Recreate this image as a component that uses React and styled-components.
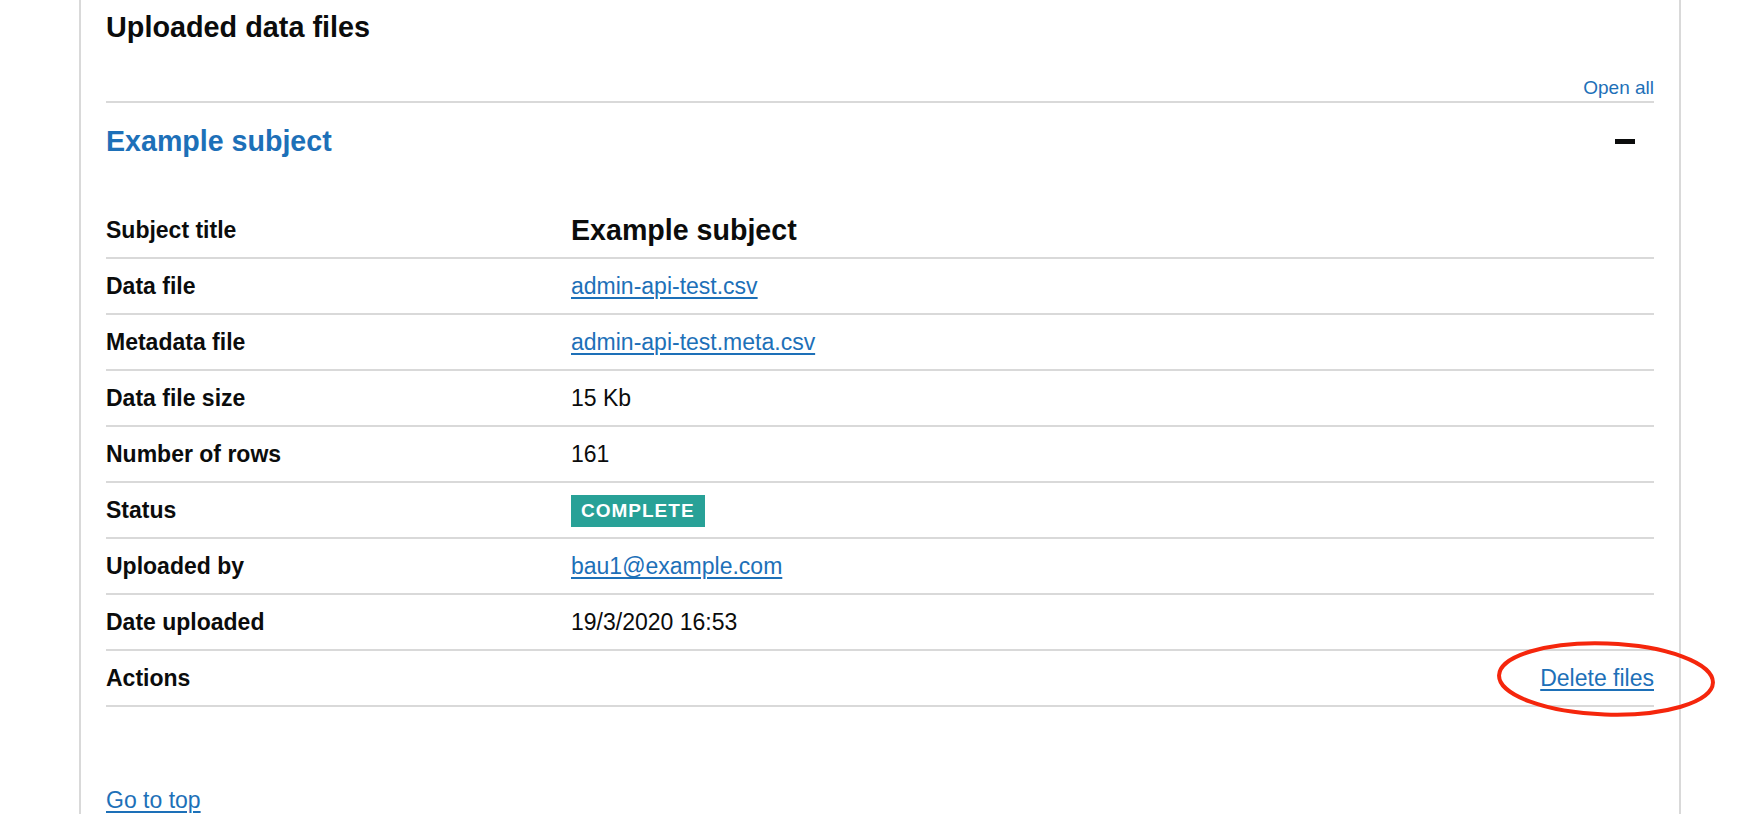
import React from "react";
import styled, { createGlobalStyle } from "styled-components";

const GlobalStyle = createGlobalStyle`
  html, body {
    margin: 0;
    padding: 0;
    background: #ffffff;
  }
  body {
    font-family: "Liberation Sans", Arial, sans-serif;
    color: #0b0c0c;
  }
`;

const Page = styled.div`
  width: 1762px;
  min-height: 814px;
  overflow: hidden;
`;

const Container = styled.main`
  box-sizing: border-box;
  margin-left: 79px;
  width: 1602px;
  min-height: 814px;
  border-left: 2px solid #d9d9d9;
  border-right: 2px solid #d9d9d9;
  padding: 9px 25px 0 25px;
`;

const Heading = styled.h2`
  margin: 0;
  font-size: 28.8px;
  line-height: 36px;
  font-weight: 700;
  color: #0b0c0c;
`;

const Controls = styled.div`
  margin-top: 31px;
  display: flex;
  justify-content: flex-end;
`;

const OpenAll = styled.button`
  border: 0;
  background: none;
  padding: 0;
  font-family: inherit;
  font-size: 19px;
  line-height: 24px;
  color: #1d70b8;
  cursor: pointer;
`;

const Section = styled.section`
  border-top: 2px solid #d9d9d9;
  margin-top: 1px;
`;

const SectionHeader = styled.div`
  display: flex;
  align-items: center;
  justify-content: space-between;
  padding: 20px 0 44px 0;
`;

const SectionTitle = styled.h3`
  margin: 0;
  font-size: 28.6px;
  line-height: 36px;
  font-weight: 700;
  color: #1d70b8;
`;

const Minus = styled.span`
  display: block;
  width: 20px;
  height: 5px;
  background: #0b0c0c;
  margin-right: 19px;
`;

const SummaryList = styled.dl`
  margin: 0;
`;

const Row = styled.div`
  box-sizing: border-box;
  display: grid;
  grid-template-columns: 465px 1fr;
  align-items: center;
  height: 56px;
  border-bottom: 2px solid #d9d9d9;
`;

const Key = styled.dt`
  margin: 0;
  font-size: 23px;
  line-height: 30px;
  font-weight: 700;
`;

const Value = styled.dd`
  margin: 0;
  font-size: ${(p) => (p.$large ? "28.6px" : "23px")};
  font-weight: ${(p) => (p.$large ? 700 : 400)};
  line-height: ${(p) => (p.$large ? "36px" : "30px")};
  text-align: ${(p) => (p.$align === "right" ? "right" : "left")};
`;

const Link = styled.a`
  color: #1d70b8;
  text-decoration: underline;
  text-decoration-thickness: 2px;
  text-underline-offset: 3px;
  cursor: pointer;
`;

const Tag = styled.strong`
  display: inline-block;
  padding: 5px 10px;
  font-size: 19px;
  line-height: 22px;
  font-weight: 700;
  letter-spacing: 1px;
  text-transform: uppercase;
  color: #ffffff;
  background: #28a197;
`;

const Highlight = styled.span`
  position: relative;
  display: inline-block;
`;

const Ellipse = styled.svg`
  position: absolute;
  left: -43px;
  top: -22px;
  width: 218px;
  height: 76px;
  overflow: visible;
  pointer-events: none;
`;

const GoTop = styled.div`
  margin-top: 78px;
  font-size: 23px;
  line-height: 30px;
`;

const rows = [
  { key: "Data file", value: <Link>admin-api-test.csv</Link> },
  { key: "Metadata file", value: <Link>admin-api-test.meta.csv</Link> },
  { key: "Data file size", value: "15 Kb" },
  { key: "Number of rows", value: "161" },
  { key: "Status", value: <Tag>Complete</Tag> },
  { key: "Uploaded by", value: <Link>bau1@example.com</Link> },
  { key: "Date uploaded", value: "19/3/2020 16:53" },
];

export default function App() {
  return (
    <Page>
      <GlobalStyle />
      <Container>
        <Heading>Uploaded data files</Heading>
        <Controls>
          <OpenAll type="button">Open all</OpenAll>
        </Controls>
        <Section>
          <SectionHeader>
            <SectionTitle>Example subject</SectionTitle>
            <Minus aria-hidden="true" />
          </SectionHeader>
          <SummaryList>
            <Row>
              <Key>Subject title</Key>
              <Value $large>Example subject</Value>
            </Row>
            {rows.map((r) => (
              <Row key={r.key}>
                <Key>{r.key}</Key>
                <Value>{r.value}</Value>
              </Row>
            ))}
            <Row>
              <Key>Actions</Key>
              <Value $align="right">
                <Highlight>
                  <Link>Delete files</Link>
                  <Ellipse viewBox="0 0 218 76">
                    <ellipse
                      cx="109"
                      cy="38"
                      rx="107"
                      ry="35.5"
                      fill="none"
                      stroke="#f5260c"
                      strokeWidth="4"
                      transform="rotate(2 109 38)"
                    />
                  </Ellipse>
                </Highlight>
              </Value>
            </Row>
          </SummaryList>
        </Section>
        <GoTop>
          <Link>Go to top</Link>
        </GoTop>
      </Container>
    </Page>
  );
}
